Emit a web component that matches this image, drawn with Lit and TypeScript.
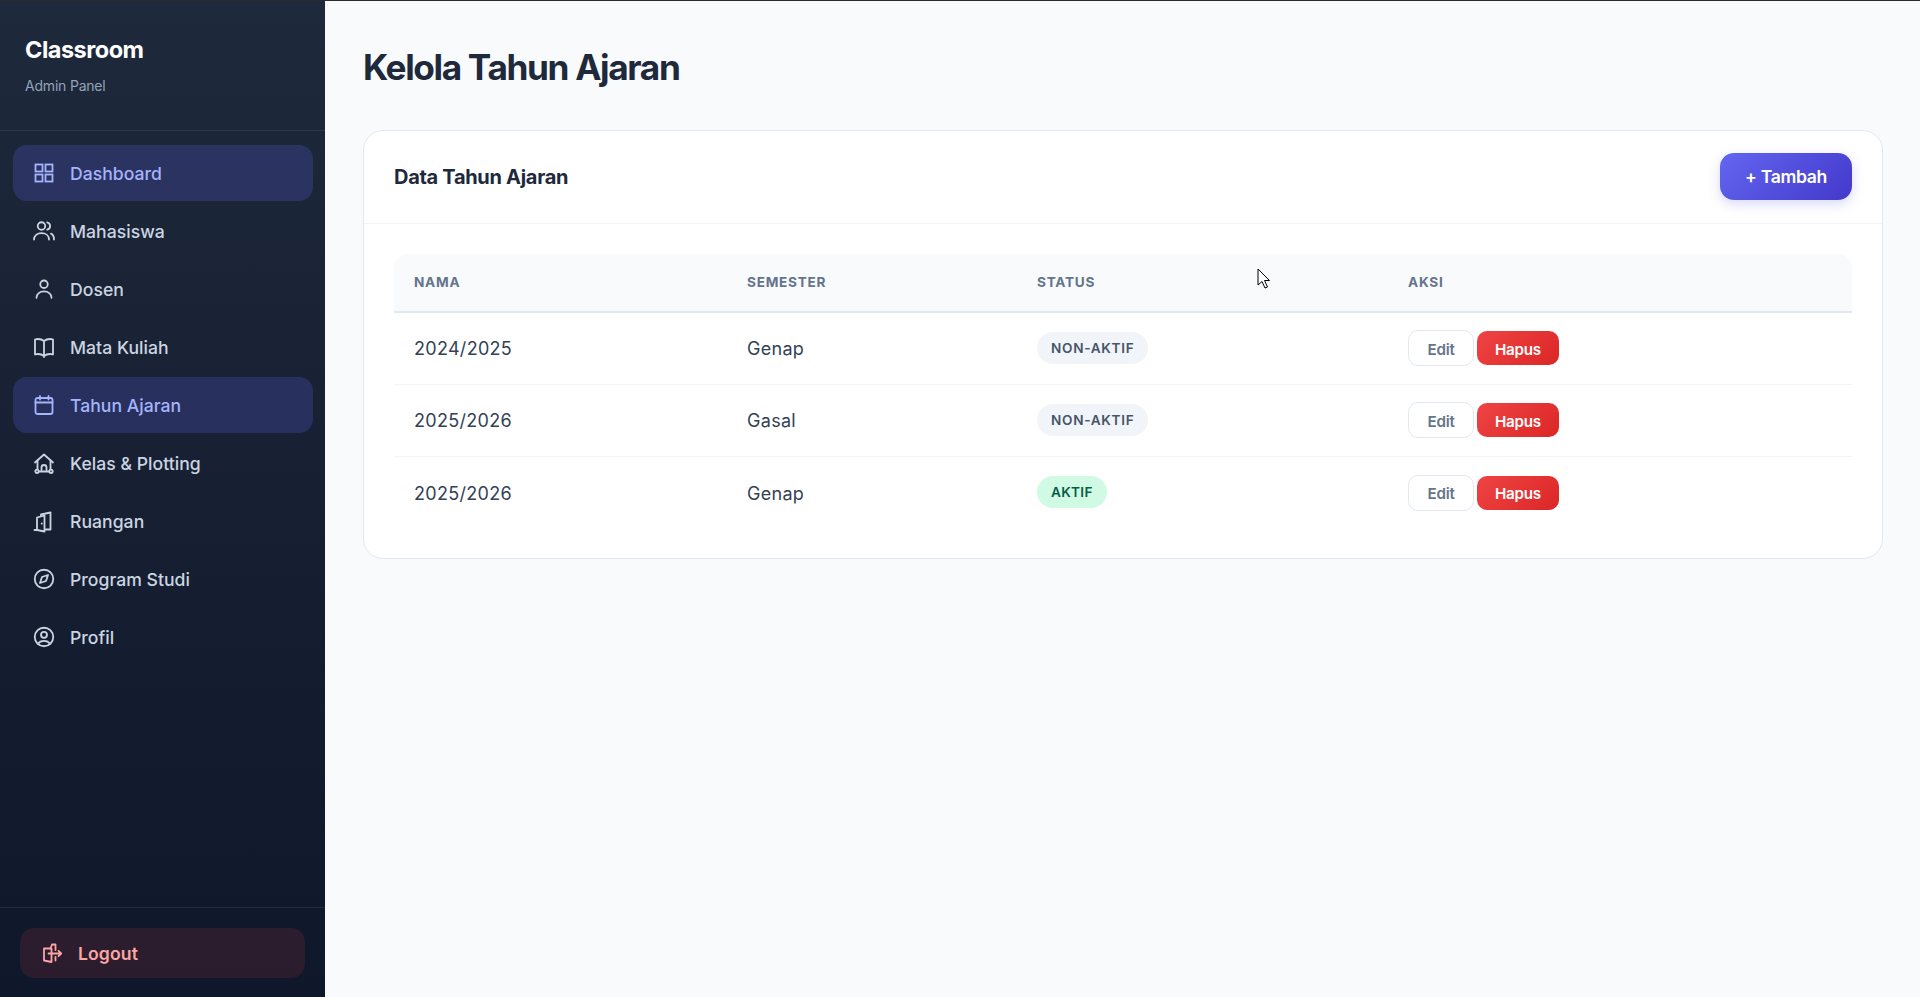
import { LitElement, html, css, svg } from "lit";
import { customElement } from "lit/decorators.js";

const ic = (body: unknown) => html`<svg class="ic" viewBox="0 0 24 24" fill="none" stroke="currentColor" stroke-width="1.8" stroke-linecap="round" stroke-linejoin="round">${body}</svg>`;

const icons = {
  grid: svg`<rect x="3.5" y="3.500" width="7" height="7" stroke-linejoin="miter"/><rect x="13.5" y="3.5" width="7" height="7" stroke-linejoin="miter"/><rect x="3.5" y="13.5" width="7" height="7" stroke-linejoin="miter"/><rect x="13.5" y="13.5" width="7" height="7" stroke-linejoin="miter"/>`,
  users: svg`<circle cx="9.500" cy="7" r="3.750"/><path d="M2 20.500c0-3.900 3.300-6.300 7.500-6.300s7.500 2.400 7.500 6.300"/><path d="M15.200 3.300c1.900.5 2.900 2 2.900 3.700s-1 3.200-2.900 3.700"/><path d="M19 14.700c1.900.8 3 3 3 5.800"/>`,
  user: svg`<circle cx="12" cy="7.250" r="3.750"/><path d="M4.500 20.750c0-3.900 3.400-6.300 7.500-6.300s7.500 2.400 7.500 6.300"/>`,
  book: svg`<path d="M12 6.040C10.400 4.700 8.200 4 6 4c-1.050 0-2.060.18-3 .5v15c.94-.32 1.950-.5 3-.5 2.200 0 4.400.7 6 2.040 1.600-1.340 3.800-2.040 6-2.040 1.050 0 2.060.18 3 .5v-15c-.94-.32-1.950-.5-3-.5-2.200 0-4.400.7-6 2.040Zm0 0V22"/>`,
  cal: svg`<rect x="3.500" y="5" width="17" height="16" rx="2"/><path d="M3.500 9.500h17M8 3v3.500M16.500 3v3.500"/>`,
  home: svg`<path d="M3 11.500 12 3.500l9 8"/><path d="M5.500 9.500v8.800M18.500 9.500v8.800"/><path d="M9.500 19v-2.500a2.500 2.500 0 0 1 5 0V19"/><path d="M7 20.500h10"/><circle cx="5" cy="20.300" r="1.700"/><circle cx="19" cy="20.300" r="1.700"/>`,
  door: svg`<path d="M2.500 21H5M5 21V8.500L12.500 6.500V22.500L5 21Z"/><path d="M9 6.800V5.500L18.500 3.500V20.500H13"/><path d="M9.800 14.300v.4"/>`,
  compass: svg`<circle cx="12" cy="12" r="9.250"/><path d="m16 8-2 6-6 2 2-6 6-2Z"/>`,
  profile: svg`<circle cx="12" cy="12" r="9.250"/><circle cx="12" cy="9.800" r="3"/><path d="M6 18.800c1.200-2 3.400-3 6-3s4.800 1 6 3"/>`,
  logout: svg`<path d="M4 7.500h7.500V21L4 19.500Z"/><path d="M10.500 7.500 12 3.500h3.500V9M15.500 16v3.500"/><path d="M8.500 12.500H21M18.500 9.800l2.700 2.700-2.700 2.700"/>`,
};

const nav: [string, keyof typeof icons, boolean][] = [
  ["Dashboard", "grid", true],
  ["Mahasiswa", "users", false],
  ["Dosen", "user", false],
  ["Mata Kuliah", "book", false],
  ["Tahun Ajaran", "cal", true],
  ["Kelas & Plotting", "home", false],
  ["Ruangan", "door", false],
  ["Program Studi", "compass", false],
  ["Profil", "profile", false],
];

const rows = [
  ["2024/2025", "Genap", false],
  ["2025/2026", "Gasal", false],
  ["2025/2026", "Genap", true],
] as const;

@customElement("app-root")
export class AppRoot extends LitElement {
  static styles = css`
    :host { display: block; height: 997px; font-family: Inter, "Noto Sans", sans-serif; color: #1e293b; position: relative; overflow: hidden; }
    * { box-sizing: border-box; }
    .app { display: flex; height: 997px; border-top: 1px solid #2a2a2a; }
    .side { width: 325px; flex: none; display: flex; flex-direction: column; background: linear-gradient(180deg, #1e293b 0%, #0f172a 100%); }
    .brand { height: 130px; padding: 32px 25px 0; border-bottom: 1px solid rgba(255,255,255,.08); flex: none; }
    .brand h1 { margin: 0; font-size: 23.5px; line-height: 33px; font-weight: 700; color: #fff; letter-spacing: -.5px; }
    .brand p { margin: 10px 0 0; font-size: 14px; line-height: 20px; color: #94a3b8; letter-spacing: -.2px; }
    .nav { flex: 1; padding: 14px 12px 14px 13px; display: flex; flex-direction: column; gap: 2px; }
    .item { height: 56px; border-radius: 14px; display: flex; align-items: center; gap: 14px; padding: 0 19px; font-size: 17.6px; font-weight: 500; color: #cbd5e1; letter-spacing: .03px; }
    .item.on { background: rgba(99,102,241,.22); color: #a5b4fc; }
    .ic { width: 24px; height: 24px; flex: none; display: block; }
    .foot { height: 90px; border-top: 1px solid rgba(255,255,255,.08); padding: 20px; flex: none; }
    .logout { height: 50px; width: 285px; border-radius: 14px; background: rgba(239,68,68,.12); color: #fca5a5; display: flex; align-items: center; gap: 14px; padding: 0 20px; font-size: 17.6px; font-weight: 600; letter-spacing: .1px; }
    .main { flex: 1; background: #f8fafc; padding: 40px 37px 0 38px; min-width: 0; }
    .main h2 { margin: 0 0 36px; font-size: 35.2px; line-height: 53px; font-weight: 700; letter-spacing: -1.35px; color: #1e293b; }
    .card { background: #fff; border: 1px solid #e2e8f0; border-radius: 20px; height: 429px; }
    .head { height: 93px; border-bottom: 1px solid #f1f5f9; padding: 0 30px; display: flex; align-items: center; justify-content: space-between; }
    .head h3 { margin: 0; font-size: 20px; font-weight: 700; letter-spacing: -.3px; }
    .add { height: 47px; width: 132px; margin-top: -1px; border-radius: 14px; border: 0; background: linear-gradient(135deg, #6366f1, #4338ca); color: #fff; display: flex; align-items: center; justify-content: center; font: 600 17.6px Inter, sans-serif; letter-spacing: -.35px; box-shadow: 0 4px 12px rgba(99,102,241,.25); }
    .body { padding: 30px 30px 0; }
    .tbl { display: grid; grid-template-columns: 333px 290px 371px 1fr; }
    .th { height: 59px; padding: 0 20px 2px; background: #f8fafc; border-bottom: 2px solid #e2e8f0; display: flex; align-items: center; font-size: 13.6px; font-weight: 700; color: #64748b; letter-spacing: .75px; }
    .th:first-child { border-top-left-radius: 14px; }
    .th:nth-child(4) { border-top-right-radius: 14px; }
    .td { height: 72px; border-bottom: 1px solid #f1f5f9; display: flex; align-items: center; padding: 0 20px; font-size: 18px; color: #334155; letter-spacing: .3px; }
    .td.last { border-bottom: 0; }
    .pill { height: 32px; margin-top: -2px; border-radius: 16px; padding: 0 14px; display: flex; align-items: center; font-size: 13.6px; font-weight: 600; background: #f1f5f9; color: #475569; letter-spacing: .7px; }
    .pill.ok { background: #d1fae5; color: #065f46; letter-spacing: .3px; }
    .acts { display: flex; align-items: center; gap: 3px; margin-top: -1px; }
    .edit { width: 66px; height: 36px; border: 1px solid #e2e8f0; background: #fff; border-radius: 10px; color: #64748b; display: flex; align-items: center; justify-content: center; font-size: 15.2px; font-weight: 600; letter-spacing: -.2px; padding-top: 2px; }
    .del { width: 82px; height: 34px; background: linear-gradient(135deg, #ef4444, #dc2626); border-radius: 10px; color: #fff; display: flex; align-items: center; justify-content: center; font-size: 15.2px; font-weight: 600; letter-spacing: -.25px; padding-top: 2px; }
    .cursor { position: absolute; left: 1257px; top: 268px; width: 14px; height: 22px; }
  `;

  render() {
    return html`
      <div class="app">
        <aside class="side">
          <div class="brand"><h1>Classroom</h1><p>Admin Panel</p></div>
          <nav class="nav">
            ${nav.map(([t, i, on]) => html`<div class="item ${on ? "on" : ""}">${ic(icons[i])}<span>${t}</span></div>`)}
          </nav>
          <div class="foot"><div class="logout">${ic(icons.logout)}<span>Logout</span></div></div>
        </aside>
        <main class="main">
          <h2>Kelola Tahun Ajaran</h2>
          <section class="card">
            <div class="head"><h3>Data Tahun Ajaran</h3><div class="add">+ Tambah</div></div>
            <div class="body">
              <div class="tbl">
                <div class="th">NAMA</div><div class="th">SEMESTER</div><div class="th">STATUS</div><div class="th">AKSI</div>
                ${rows.map(([y, s, a], i) => {
                  const c = i === rows.length - 1 ? "td last" : "td";
                  return html`
                    <div class=${c}>${y}</div>
                    <div class=${c}>${s}</div>
                    <div class=${c}><span class="pill ${a ? "ok" : ""}">${a ? "AKTIF" : "NON-AKTIF"}</span></div>
                    <div class=${c}><div class="acts"><div class="edit">Edit</div><div class="del">Hapus</div></div></div>`;
                })}
              </div>
            </div>
          </section>
        </main>
      </div>
      <svg class="cursor" viewBox="0 0 14 22"><path d="M1 1v16l4-3.500 3 6.500 2.500-1-3-6.500H12.500Z" fill="#fff" stroke="#000" stroke-width="1"/></svg>
    `;
  }
}
